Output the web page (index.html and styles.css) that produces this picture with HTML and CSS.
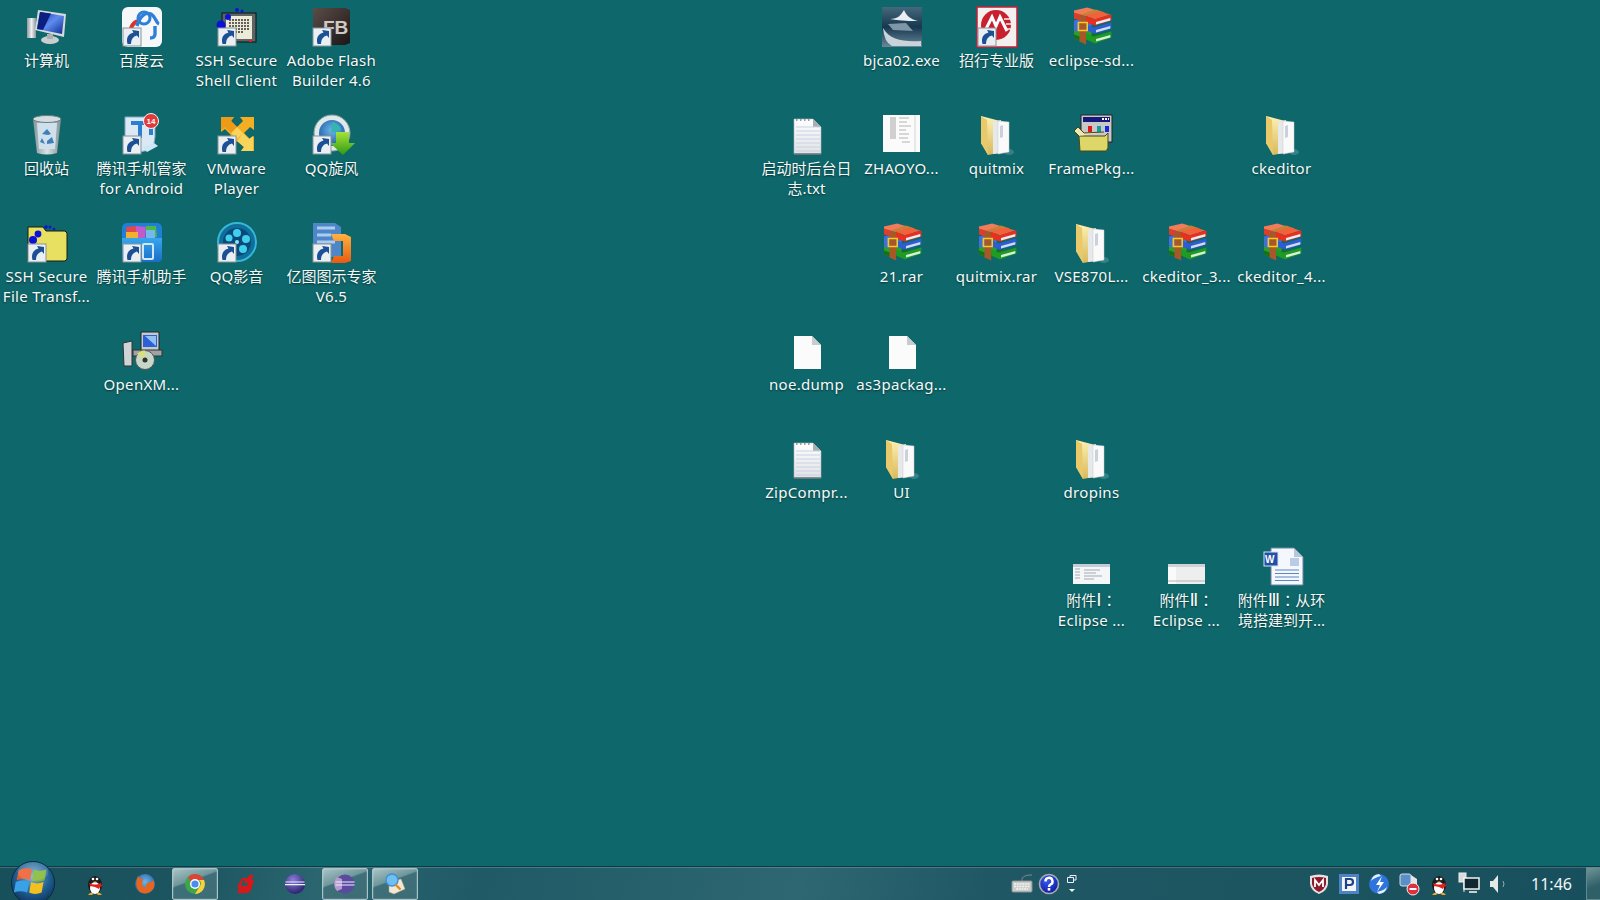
FILE: index.html
```html
<!DOCTYPE html>
<html lang="zh-CN">
<head>
    <meta charset="UTF-8">
    <title>桌面</title>
    <link rel="stylesheet" href="styles.css">
</head>
<body>
<svg class="defs" aria-hidden="true">
    <defs>
        <linearGradient id="gScreen" x1="0" y1="0" x2="1" y2="1"><stop offset="0" stop-color="#0a2ea8"/><stop offset=".5" stop-color="#5f8cf0"/><stop offset="1" stop-color="#0c2a90"/></linearGradient>
        <linearGradient id="gGrey" x1="0" y1="0" x2="1" y2="0"><stop offset="0" stop-color="#8f9a9c"/><stop offset=".5" stop-color="#eef1f1"/><stop offset="1" stop-color="#8d9698"/></linearGradient>
        <linearGradient id="gFolder" x1="0" y1="0" x2="0" y2="1"><stop offset="0" stop-color="#fdf0b4"/><stop offset="1" stop-color="#d9b95c"/></linearGradient>
        <linearGradient id="gPaper" x1="0" y1="0" x2="0" y2="1"><stop offset="0" stop-color="#ffffff"/><stop offset="1" stop-color="#dfe2e6"/></linearGradient>
        <linearGradient id="gDark" x1="0" y1="0" x2="1" y2="1"><stop offset="0" stop-color="#5b4d48"/><stop offset="1" stop-color="#1c1615"/></linearGradient>
        <linearGradient id="gBjca" x1="0" y1="0" x2="0" y2="1"><stop offset="0" stop-color="#45687c"/><stop offset=".5" stop-color="#16384f"/><stop offset="1" stop-color="#6a8798"/></linearGradient>
        <linearGradient id="gBlue" x1="0" y1="0" x2="0" y2="1"><stop offset="0" stop-color="#37a6ee"/><stop offset="1" stop-color="#1a6dc8"/></linearGradient>
        <linearGradient id="gGreen" x1="0" y1="0" x2="0" y2="1"><stop offset="0" stop-color="#a6e23a"/><stop offset="1" stop-color="#2f9a12"/></linearGradient>
        <linearGradient id="gOrange" x1="0" y1="0" x2="0" y2="1"><stop offset="0" stop-color="#ffb340"/><stop offset="1" stop-color="#e85a10"/></linearGradient>
        <radialGradient id="gOrb" cx=".5" cy=".35" r=".7"><stop offset="0" stop-color="#7fb4d8"/><stop offset=".55" stop-color="#1f5f92"/><stop offset="1" stop-color="#0b2c52"/></radialGradient>
        <radialGradient id="gEclipse" cx=".4" cy=".3" r=".8"><stop offset="0" stop-color="#8a80d8"/><stop offset="1" stop-color="#1d1560"/></radialGradient>
        <radialGradient id="gHelp" cx=".4" cy=".3" r=".8"><stop offset="0" stop-color="#3a5cf0"/><stop offset="1" stop-color="#08129a"/></radialGradient>
        <radialGradient id="gFox" cx=".5" cy=".4" r=".6"><stop offset="0" stop-color="#6fb6e8"/><stop offset="1" stop-color="#1e5fa8"/></radialGradient>

        <symbol id="sc" viewBox="0 0 48 48">
            <rect x="5" y="24" width="18" height="18" fill="#e9eff3" stroke="#8b9499"/>
            <path d="M9.500 40c-1.500-6 .5-10 6-11.500l-1.500-2.500 7 1v7l-2-2.500c-4 1-6 4-6 8.500z" fill="#1d4f95"/>
        </symbol>
        <symbol id="computer" viewBox="0 0 48 48">
            <ellipse cx="27" cy="36" rx="9" ry="4" fill="#c9cfd0"/>
            <rect x="4" y="14" width="9" height="20" fill="url(#gGrey)"/>
            <path d="M15 6 43 10 41 33 12 26z" fill="#d5dadb"/>
            <path d="M17 8 41 12 39 30 14 25z" fill="url(#gScreen)"/>
            <path d="M17 8 28 9.500 20 26 14 25z" fill="#0a1f80"/>
            <rect x="24" y="30" width="6" height="5" fill="#a9b0b2"/>
        </symbol>
        <symbol id="bin" viewBox="0 0 48 48">
            <path d="M10 7h28l-4 34q-10 3-20 0z" fill="url(#gGrey)" opacity=".9"/>
            <ellipse cx="24" cy="7" rx="14" ry="3.500" fill="#d4dde2" stroke="#6d7a80"/>
            <path d="M14 11h20l-2 26H16z" fill="#cfe0ec"/>
            <path d="M19 22l5-5 4 5-3 1zM29 25l2 6-7 1v-3zM19 26l3 6-5-2z" fill="#3d7fb8"/>
        </symbol>
        <symbol id="baidu" viewBox="0 0 48 48">
            <rect x="4" y="3" width="40" height="40" rx="6" fill="#f6f7f8"/>
            <path d="M13 26a9 9 0 0 1 9-9" stroke="#d8362c" stroke-width="4" fill="none"/>
            <path d="M19 22c3-11 9-14 14-12 5 3 5 9 8 10" stroke="#2f7fd8" stroke-width="3.400" fill="none"/>
            <circle cx="26" cy="14" r="6" fill="none" stroke="#2f7fd8" stroke-width="3"/>
            <path d="M37 22v8q0 4-5 4" stroke="#2f7fd8" stroke-width="3.400" fill="none"/>
        </symbol>
        <symbol id="ssh" viewBox="0 0 48 48">
            <rect x="9" y="9" width="34" height="29" fill="#5d6466" stroke="#111"/>
            <rect x="13" y="12" width="26" height="23" fill="#ecebd8"/>
            <path d="M16 16h20M16 19h20M16 22h20M16 25h20M16 28h14" stroke="#333" stroke-width="1.400" stroke-dasharray="2 1"/>
            <rect x="36" y="36" width="3" height="2" fill="#e02020"/>
            <circle cx="8" cy="21" r="4.500" fill="#0a12d8"/><circle cx="15" cy="13" r="3" fill="#0a12d8"/>
            <circle cx="24" cy="6" r="2" fill="#0a12d8"/><circle cx="29" cy="7" r="1.500" fill="#0a12d8"/>
        </symbol>
        <symbol id="flash" viewBox="0 0 48 48">
            <path d="M5 4h32l5 2v33l-5 2H5z" fill="url(#gDark)"/>
            <text x="15" y="30" class="fb">FB</text>
        </symbol>
        <symbol id="txgj" viewBox="0 0 48 48">
            <path d="M7 5h30v20q0 14-16 15H7z" fill="#dbe9f4" stroke="#7fa6c8"/>
            <path d="M13 11h20v12M22 12v14" stroke="#2a7fd0" stroke-width="4" fill="none"/>
            <path d="M24 35l12-4 4 3-11 6z" fill="#cfe7f5"/>
            <circle cx="33" cy="9" r="7.500" fill="#e23a3a" stroke="#f5f5f5"/>
            <text x="28.500" y="12" class="badge">14</text>
        </symbol>
        <symbol id="vmware" viewBox="0 0 48 48">
            <path d="M8 5h13l-3 4 6 6 6-6-3-4h14v13l-4-3-6 6 6 6 4-3v15H28l3-4-7-6-6 6 3 4H8V26l4 3 6-6-6-6-4 3z" fill="#f4ae22"/>
            <path d="M24 15l6 6-6 6-6-6zM30 21l6 6 4-3v15H28l3-4-7-6z" fill="#f8d45a"/>
            <path d="M8 5h13l-3 4 6 6-6 6-6-6-4 3z" fill="#ec9a18"/>
        </symbol>
        <symbol id="whirl" viewBox="0 0 48 48">
            <circle cx="24" cy="21" r="18" fill="#dfe9ea" stroke="#8a9ca0"/>
            <circle cx="24" cy="21" r="13" fill="url(#gFox)"/>
            <path d="M24 10a10 10 0 0 1 9 8l-10 3z" fill="#36b5b0"/>
            <path d="M28 20h13v11h6L35 43 22 31h6z" fill="url(#gGreen)"/>
        </symbol>
        <symbol id="sshfolder" viewBox="0 0 48 48">
            <path d="M5 7h15l3 4h19l2 2v26l-2 2H5z" fill="#e8e060" stroke="#1a1a08"/>
            <circle cx="15" cy="14" r="3.400" fill="#0a12d8"/><circle cx="10" cy="20" r="4" fill="#0a12d8"/>
            <circle cx="23" cy="7" r="1.800" fill="#0a12d8"/><circle cx="27" cy="7" r="1.500" fill="#0a12d8"/><circle cx="31" cy="9" r="1.300" fill="#0a12d8"/>
        </symbol>
        <symbol id="txzs" viewBox="0 0 48 48">
            <rect x="4" y="3" width="40" height="39" rx="5" fill="#1f7fd6"/>
            <path d="M8 7l10-1 2 11H9z" fill="#e24a4a"/>
            <path d="M18 6l10 1-1 11h-9z" fill="#c45ac8"/>
            <path d="M28 6h10l1 11H28z" fill="#4cb848"/>
            <path d="M8 12h12v6H8z" fill="#f2b030"/>
            <path d="M28 10h9v8h-9z" fill="#76b8ec"/>
            <path d="M4 18h40v20q0 4-5 4H9q-5 0-5-4z" fill="url(#gBlue)"/>
            <rect x="25" y="24" width="10" height="15" rx="1" fill="none" stroke="#cfe7f8" stroke-width="2"/>
        </symbol>
        <symbol id="qqplayer" viewBox="0 0 48 48">
            <circle cx="24" cy="22" r="19" fill="#0d6f9a" stroke="#35b7d8" stroke-width="2"/>
            <circle cx="24" cy="22" r="14" fill="#0b4a78"/>
            <circle cx="24" cy="13" r="4" fill="#3fd0ee"/><circle cx="33" cy="19" r="4" fill="#3fd0ee"/>
            <circle cx="30" cy="29" r="4" fill="#3fd0ee"/><circle cx="24" cy="22" r="2" fill="#8fe6f5"/>
            <circle cx="16" cy="18" r="3.500" fill="#3fd0ee"/>
        </symbol>
        <symbol id="edraw" viewBox="0 0 48 48">
            <path d="M5 3h22l6 4v30H5z" fill="#4e86c8"/>
            <path d="M9 8h18M9 15h14M9 22h18" stroke="#a9cdf0" stroke-width="3"/>
            <path d="M23 14h14l6 3v24l-6 2H23l3-7h9V21H26z" fill="url(#gOrange)"/>
        </symbol>
        <symbol id="setup" viewBox="0 0 48 48">
            <path d="M23 4h18v20H23z" fill="#c4c9ca" stroke="#222"/>
            <rect x="25" y="7" width="14" height="12" fill="#2c5fd8"/>
            <path d="M27 8h11v10z" fill="#8fc2f0"/>
            <path d="M5 15l9-2v25H6z" fill="#cfd4d4" stroke="#333"/>
            <rect x="15" y="22" width="29" height="6" fill="#9ea3a3" stroke="#333"/>
            <circle cx="27" cy="32" r="9.500" fill="#c8d8c8" stroke="#555"/>
            <path d="M27 32l-8-6a9.500 9.500 0 0 1 8-3.500z" fill="#d8e080"/>
            <circle cx="27" cy="32" r="2.500" fill="#333"/>
        </symbol>
        <symbol id="bjca" viewBox="0 0 48 48">
            <rect x="4" y="3" width="40" height="40" fill="url(#gBjca)"/>
            <path d="M12 15c8 0 11-4 14-9 2 5 6 9 14 11-9 0-14 0-28-2z" fill="#e8eef2"/>
            <path d="M5 24c7 12 20 14 38 13v5H14q-8-4-9-18z" fill="#c8d3da"/>
            <path d="M10 20l18-1 7 8-20-1z" fill="#7e96a6"/>
        </symbol>
        <symbol id="cmb" viewBox="0 0 48 48">
            <rect x="4" y="3" width="40" height="40" fill="#f4f0ee" stroke="#c41e3a" stroke-width="1.500"/>
            <circle cx="23" cy="21" r="15" fill="#c8202f"/>
            <path d="M12 27l7-14 4 9 4-9 7 14" stroke="#fff" stroke-width="3" fill="none"/>
            <path d="M31 15h10M33 20h8M33 25h8" stroke="#f4f0ee" stroke-width="1.600"/>
        </symbol>
        <symbol id="rar" viewBox="0 0 48 48">
            <g transform="translate(.5 2.500) scale(1.100 1)">
                <path d="M5 23l13-4 3 4v8l-8 4-8-3z" fill="#2aa02a"/>
                <path d="M5 32l8 3 14-4v-4l-14 4-8-3z" fill="#187018"/>
                <path d="M5 14l9-3 7 4v8l-8 4-8-3z" fill="#3f6fd8"/>
                <path d="M5 4l12-3 9 3-13 5-8-2z" fill="#f07c5c"/>
                <path d="M5 6l9 3v6L5 12z" fill="#e03c2c"/>
                <path d="M11 8l14-5 8 3-14 5z" fill="#c88038"/>
                <path d="M10 8l6 2v28l-6-3z" fill="#a85828"/>
                <path d="M16 9l13-4 9 3-14 5z" fill="#f2603c"/>
                <path d="M16 9l7 4 16-5v6l-15 5-8-3z" fill="#e8301c"/>
                <path d="M25 15.500l13-4v2.500l-13 4z" fill="#e8eef8"/>
                <path d="M16 18l7 3 16-5v6l-15 5-8-3z" fill="#2f5cd0"/>
                <path d="M25 23.500l13-4v2.500l-13 4z" fill="#cfdcf5"/>
                <path d="M16 27l7 3 16-5v6l-15 6-8-4z" fill="#1f9a22"/>
                <path d="M25 32.500l13-4v2.500l-13 4z" fill="#d8efd8"/>
                <rect x="9" y="16" width="8" height="8" fill="none" stroke="#f8c820" stroke-width="1.500"/>
            </g>
        </symbol>
        <symbol id="folder" viewBox="0 0 48 48">
            <ellipse cx="36" cy="40" rx="5" ry="3" fill="#4f9598" opacity=".6"/>
            <path d="M8 4l23 6v30L15 43 8 31z" fill="url(#gFolder)"/>
            <path d="M20 10l8-2 1 33-9 1z" fill="#e6e8ea"/>
            <path d="M25 9l11 1v30l-11 2z" fill="#fafafa" stroke="#c8c8c8" stroke-width=".5"/>
            <path d="M27 14l3-1v12l-3 1z" fill="#c9d2da"/>
            <path d="M8 4l6 4 1 35-7-12z" fill="#e9c96a"/>
        </symbol>
        <symbol id="note" viewBox="0 0 48 48">
            <path d="M11 7h19l8 8v27H11z" fill="url(#gPaper)" stroke="#aeb4b8" stroke-width=".6"/>
            <path d="M30 7v8h8z" fill="#a9aeb2"/>
            <path d="M13 15h24M13 19h24M13 23h24M13 27h24M13 31h24M13 35h24M13 39h24" stroke="#c9d2e4"/>
            <path d="M13 8h16" stroke="#9aa0a4" stroke-dasharray="1.500 2.500" stroke-width="2"/>
            <path d="M11 42h27" stroke="#6d7478" stroke-width="1.500"/>
        </symbol>
        <symbol id="blank" viewBox="0 0 48 48">
            <path d="M11 8h18l9 9v24H11z" fill="#fbfbfb"/>
            <path d="M29 8v9h9z" fill="#c9cccf"/>
        </symbol>
        <symbol id="zhaoyo" viewBox="0 0 48 48">
            <rect x="5" y="3" width="37" height="37" fill="#fbfbfb"/>
            <path d="M12 6h6M12 8h6M12 10h6M12 12h6M12 14h6M12 16h6M12 18h6M12 20h6M12 22h6M12 24h6M12 26h6" stroke="#9a9a9a" stroke-width=".9"/>
            <path d="M21 6h10M21 10h8M21 14h12M21 18h7M21 22h10M21 26h9M24 30h8" stroke="#aaa" stroke-width=".9"/>
            <path d="M37 3v37" stroke="#d6d6d6"/>
        </symbol>
        <symbol id="framepkg" viewBox="0 0 48 48">
            <rect x="13" y="3" width="31" height="27" fill="#c8c8c8" stroke="#222"/>
            <rect x="15" y="5" width="27" height="5" fill="#16187a"/>
            <path d="M34 6h2v2h-2zM37 6h2v2h-2zM40 6h1v2h-1z" fill="#fff"/>
            <rect x="20" y="14" width="4" height="6" fill="#e01818"/><rect x="29" y="14" width="4" height="6" fill="#10a0a0"/><rect x="37" y="14" width="4" height="6" fill="#1828d8"/>
            <path d="M11 24h28v15H13z" fill="#e6e070"/>
            <path d="M11 24h26l3-3v15l-2 3H12z" fill="#ddd76a" stroke="#4a4614"/>
            <path d="M11 24l-5-5 4-4 6 6 20-1" fill="#efe9b0" stroke="#4a4614"/>
        </symbol>
        <symbol id="shot1" viewBox="0 0 48 48">
            <rect x="5" y="20" width="37" height="20" fill="#f4f6f8"/>
            <rect x="5" y="20" width="37" height="3" fill="#c4ccd8"/>
            <path d="M7 25h5M7 28h5M7 31h5M7 34h5M16 26h16M16 29h12M16 32h18M16 35h10" stroke="#a2a8b4"/>
        </symbol>
        <symbol id="shot2" viewBox="0 0 48 48">
            <rect x="5" y="20" width="37" height="20" fill="#eeeeee"/>
            <rect x="5" y="20" width="37" height="3" fill="#cfd3d8"/>
            <rect x="5" y="23" width="8" height="17" fill="#fafafa"/>
            <path d="M5 37h37" stroke="#b0b4b8"/>
        </symbol>
        <symbol id="word" viewBox="0 0 48 48">
            <path d="M13 4h23l9 9v28H13z" fill="#f4f7fb" stroke="#6c82a4"/>
            <path d="M36 4v9h9z" fill="#b8c6da"/>
            <path d="M17 26h24M17 29.500h24M17 33h24M17 36.500h24" stroke="#5a86c8"/>
            <rect x="32" y="14" width="9" height="8" fill="#b8cce6"/>
            <rect x="6" y="8" width="14" height="14" fill="#2050a8" stroke="#d8e0ee"/>
            <text x="7" y="18.500" class="w">W</text>
        </symbol>

        <symbol id="qq" viewBox="0 0 24 24">
            <ellipse cx="12" cy="13" rx="7" ry="9" fill="#1c1c1c"/>
            <ellipse cx="12" cy="16" rx="5" ry="6" fill="#fff"/>
            <path d="M6 11q6 3 12 0l1 3q-3 1-3 3l-4-2-5-1z" fill="#e02020"/>
            <path d="M7 21h4l-2 2H5zM13 21h4l2 2h-4z" fill="#f4a81c"/>
            <circle cx="10" cy="7" r="1.300" fill="#fff"/><circle cx="14" cy="7" r="1.300" fill="#fff"/>
            <path d="M10.500 9.500h3l-1.500 1.500z" fill="#f4a81c"/>
        </symbol>
        <symbol id="firefox" viewBox="0 0 24 24">
            <circle cx="12" cy="12" r="10" fill="url(#gFox)"/>
            <path d="M5 4c-2 5-3 12 2 16 5 3 12 1 14-5 1-3 0-6-1-7-1 3-3 3-4 2-2 1-4 3-2 5-3 1-5-1-5-4 0-2 1-3 2-4-3 0-4 0-6-3z" fill="#e8651c"/>
        </symbol>
        <symbol id="chrome" viewBox="0 0 24 24">
            <circle cx="12" cy="12" r="10" fill="#3ea648"/>
            <path d="M12 2a10 10 0 0 1 9 6H12a4 4 0 0 0-4 2L5 5a10 10 0 0 1 7-3z" fill="#dd4235"/>
            <path d="M21 8a10 10 0 0 1-9 14l5-8a4 4 0 0 0-1-6z" fill="#fbcf3e"/>
            <circle cx="12" cy="12" r="5" fill="#fff"/><circle cx="12" cy="12" r="3.600" fill="#4a8cf0"/>
        </symbol>
        <symbol id="flashget" viewBox="0 0 24 24">
            <path d="M17 2l4 2-3 4H10l-2 6h6l1-3H11l1-3h9l-3 10-3 3H4l2-5-2-1 5-9h6z" fill="#d81818"/>
        </symbol>
        <symbol id="eclipse" viewBox="0 0 24 24">
            <circle cx="12" cy="12" r="10" fill="url(#gEclipse)"/>
            <path d="M2.500 10h19M2 12.600h20" stroke="#f0f0ff" stroke-width="1.100"/>
        </symbol>
        <symbol id="eclipse2" viewBox="0 0 24 24">
            <circle cx="12" cy="12" r="9.500" fill="#5a4aa0"/>
            <path d="M4 5a10 10 0 0 0 0 14l5-2V7z" fill="#b89ad0"/>
            <path d="M2.500 10h19M2.500 13h19" stroke="#f0f0ff" stroke-width="1.200"/>
        </symbol>
        <symbol id="search" viewBox="0 0 24 24">
            <path d="M6 10l12-3 4 10-11 5-5-2z" fill="#f2e8d4" stroke="#b0a58c" stroke-width=".5"/>
            <circle cx="9" cy="8" r="6" fill="#6fc0f0" stroke="#3f8fd8" stroke-width="1.400"/>
            <path d="M12.500 12.500l5 5" stroke="#e08a20" stroke-width="2.400"/>
        </symbol>
        <symbol id="keyboard" viewBox="0 0 24 24">
            <path d="M12 9c-1-5 5-6 10-6" stroke="#888" fill="none"/>
            <rect x="2" y="9" width="20" height="11" rx="1" fill="#c8ccca" stroke="#8b8f8d"/>
            <path d="M4 12h16M4 14.500h16M6 17h12" stroke="#f2f4f2" stroke-width="1.400" stroke-dasharray="2 .7"/>
        </symbol>
        <symbol id="help" viewBox="0 0 24 24">
            <circle cx="12" cy="12" r="9.500" fill="url(#gHelp)" stroke="#a8acb0" stroke-width="1.600"/>
            <path d="M8.500 9.500a3.500 3.500 0 1 1 5 3c-1 .6-1.500 1-1.500 2.500" fill="none" stroke="#fff" stroke-width="2.400"/>
            <rect x="10.700" y="16" width="2.600" height="2.600" fill="#fff"/>
        </symbol>
        <symbol id="mcafee" viewBox="0 0 24 24">
            <path d="M3 4q9-3 18 0v8q-1 7-9 10-8-3-9-10z" fill="#e8e2e0"/>
            <path d="M5 6q7-2 14 0v6q-1 5-7 8-6-3-7-8z" fill="#8c1c2c"/>
            <path d="M8 15V8l4 5 4-5v7" stroke="#fff" stroke-width="1.800" fill="none"/>
        </symbol>
        <symbol id="parking" viewBox="0 0 24 24">
            <rect x="2" y="2" width="20" height="20" fill="#4d84c8"/>
            <rect x="5" y="5" width="14" height="14" fill="#f2f5f8"/>
            <path d="M9 17V7h4a3 3 0 0 1 0 6H9" stroke="#20408c" stroke-width="2.200" fill="none"/>
        </symbol>
        <symbol id="thunder" viewBox="0 0 24 24">
            <circle cx="12" cy="12" r="10" fill="#2d74dc"/>
            <path d="M4 9a9 9 0 0 1 8-7l2 2c-5 1-8 3-10 5z" fill="#e8f0fa"/>
            <path d="M20 15a9 9 0 0 1-8 7l-2-2c5-1 8-3 10-5z" fill="#e8f0fa"/>
            <path d="M15 4l-6 9h4l-3 7 7-10h-4z" fill="#fff"/>
        </symbol>
        <symbol id="netblock" viewBox="0 0 24 24">
            <rect x="3" y="2" width="11" height="12" rx="2" fill="#5a90c8" stroke="#d8dde0"/>
            <path d="M14 3l6 4v6h-6z" fill="#e4e4e4"/>
            <circle cx="16" cy="17" r="6" fill="#e03040" stroke="#f0f0f0"/>
            <rect x="12.500" y="16" width="7" height="2" fill="#fff"/>
        </symbol>
        <symbol id="network" viewBox="0 0 24 24">
            <rect x="2" y="1" width="7" height="9" fill="#d8dcdc" stroke="#eee"/>
            <path d="M7 5v15" stroke="#eee"/>
            <rect x="7" y="6" width="15" height="11" fill="#102830" stroke="#f2f2f2" stroke-width="1.500"/>
            <path d="M12 20h8" stroke="#f2f2f2" stroke-width="1.600"/>
        </symbol>
        <symbol id="volume" viewBox="0 0 24 24">
            <path d="M3 9h3l5-6v18l-5-6H3z" fill="#e6e8e8"/>
            <path d="M16 9q2 3 0 6" stroke="#9aa" fill="none"/>
        </symbol>
    </defs>
</svg>

<div class="desktop">
    <div class="item c0 r0"><svg class="ico"><use href="#computer"/></svg><span class="label">计算机</span></div>
    <div class="item c1 r0"><svg class="ico"><use href="#baidu"/><use href="#sc"/></svg><span class="label">百度云</span></div>
    <div class="item c2 r0"><svg class="ico"><use href="#ssh"/><use href="#sc"/></svg><span class="label en">SSH Secure<br>Shell Client</span></div>
    <div class="item c3 r0"><svg class="ico"><use href="#flash"/><use href="#sc"/></svg><span class="label en">Adobe Flash<br>Builder 4.6</span></div>
    <div class="item c9 r0"><svg class="ico"><use href="#bjca"/></svg><span class="label en">bjca02.exe</span></div>
    <div class="item c10 r0"><svg class="ico"><use href="#cmb"/><use href="#sc"/></svg><span class="label">招行专业版</span></div>
    <div class="item c11 r0"><svg class="ico"><use href="#rar"/></svg><span class="label en">eclipse-sd...</span></div>

    <div class="item c0 r1"><svg class="ico"><use href="#bin"/></svg><span class="label">回收站</span></div>
    <div class="item c1 r1"><svg class="ico"><use href="#txgj"/><use href="#sc"/></svg><span class="label">腾讯手机管家<br><span class="en">for Android</span></span></div>
    <div class="item c2 r1"><svg class="ico"><use href="#vmware"/><use href="#sc"/></svg><span class="label en">VMware<br>Player</span></div>
    <div class="item c3 r1"><svg class="ico"><use href="#whirl"/><use href="#sc"/></svg><span class="label">QQ旋风</span></div>
    <div class="item c8 r1"><svg class="ico"><use href="#note"/></svg><span class="label">启动时后台日<br>志.txt</span></div>
    <div class="item c9 r1"><svg class="ico"><use href="#zhaoyo"/></svg><span class="label en">ZHAOYO...</span></div>
    <div class="item c10 r1"><svg class="ico"><use href="#folder"/></svg><span class="label en">quitmix</span></div>
    <div class="item c11 r1"><svg class="ico"><use href="#framepkg"/></svg><span class="label en">FramePkg...</span></div>
    <div class="item c13 r1"><svg class="ico"><use href="#folder"/></svg><span class="label en">ckeditor</span></div>

    <div class="item c0 r2"><svg class="ico"><use href="#sshfolder"/><use href="#sc"/></svg><span class="label en">SSH Secure<br>File Transf...</span></div>
    <div class="item c1 r2"><svg class="ico"><use href="#txzs"/><use href="#sc"/></svg><span class="label">腾讯手机助手</span></div>
    <div class="item c2 r2"><svg class="ico"><use href="#qqplayer"/><use href="#sc"/></svg><span class="label">QQ影音</span></div>
    <div class="item c3 r2"><svg class="ico"><use href="#edraw"/><use href="#sc"/></svg><span class="label">亿图图示专家<br><span class="en">V6.5</span></span></div>
    <div class="item c9 r2"><svg class="ico"><use href="#rar"/></svg><span class="label en">21.rar</span></div>
    <div class="item c10 r2"><svg class="ico"><use href="#rar"/></svg><span class="label en">quitmix.rar</span></div>
    <div class="item c11 r2"><svg class="ico"><use href="#folder"/></svg><span class="label en">VSE870L...</span></div>
    <div class="item c12 r2"><svg class="ico"><use href="#rar"/></svg><span class="label en">ckeditor_3...</span></div>
    <div class="item c13 r2"><svg class="ico"><use href="#rar"/></svg><span class="label en">ckeditor_4...</span></div>

    <div class="item c1 r3"><svg class="ico"><use href="#setup"/></svg><span class="label en">OpenXM...</span></div>
    <div class="item c8 r3"><svg class="ico"><use href="#blank"/></svg><span class="label en">noe.dump</span></div>
    <div class="item c9 r3"><svg class="ico"><use href="#blank"/></svg><span class="label en">as3packag...</span></div>

    <div class="item c8 r4"><svg class="ico"><use href="#note"/></svg><span class="label en">ZipCompr...</span></div>
    <div class="item c9 r4"><svg class="ico"><use href="#folder"/></svg><span class="label en">UI</span></div>
    <div class="item c11 r4"><svg class="ico"><use href="#folder"/></svg><span class="label en">dropins</span></div>

    <div class="item c11 r5"><svg class="ico"><use href="#shot1"/></svg><span class="label cn-tc" lang="zh-TW">附件<span class="roman">Ⅰ</span>：<br><span class="en">Eclipse ...</span></span></div>
    <div class="item c12 r5"><svg class="ico"><use href="#shot2"/></svg><span class="label cn-tc" lang="zh-TW">附件<span class="roman">Ⅱ</span>：<br><span class="en">Eclipse ...</span></span></div>
    <div class="item c13 r5"><svg class="ico"><use href="#word"/></svg><span class="label cn-tc" lang="zh-TW">附件<span class="roman">Ⅲ</span>：从环<br>境搭建到开...</span></div>
</div>

<div class="taskbar">
    <svg class="orb" viewBox="0 0 48 48">
        <circle cx="24" cy="24" r="22.500" fill="url(#gOrb)" stroke="#0c2a3c"/>
        <path d="M9 11q6-4 14-1l-2 11q-7-3-14 0z" fill="#ee5a2a"/>
        <path d="M25 10q6 3 13 0l-2 11q-7 3-13 0z" fill="#80b830"/>
        <path d="M6 23q7-3 14 0l-2 11q-7-3-14 0z" fill="#3aa0e8"/>
        <path d="M22 23q6 3 13 0l-2 11q-7 3-13 0z" fill="#f4c020"/>
        <ellipse cx="24" cy="12" rx="16" ry="10" fill="#fff" opacity=".14"/>
    </svg>
    <div class="tasks">
        <div class="task"><svg class="tk"><use href="#qq"/></svg></div>
        <div class="task"><svg class="tk"><use href="#firefox"/></svg></div>
        <div class="task on"><svg class="tk"><use href="#chrome"/></svg></div>
        <div class="task"><svg class="tk"><use href="#flashget"/></svg></div>
        <div class="task"><svg class="tk"><use href="#eclipse"/></svg></div>
        <div class="task on"><svg class="tk"><use href="#eclipse2"/></svg></div>
        <div class="task on"><svg class="tk"><use href="#search"/></svg></div>
    </div>
    <div class="langbar">
        <svg class="tk"><use href="#keyboard"/></svg>
        <svg class="tk"><use href="#help"/></svg>
        <div class="lang-ctl">
            <svg class="restore" viewBox="0 0 10 8"><path d="M.5 2.500h6v5h-6zM3 2.500v-2h6v4.500H6.500" fill="none" stroke="#eef"/></svg>
            <span class="caret"></span>
        </div>
    </div>
    <div class="tray">
        <svg class="tk"><use href="#mcafee"/></svg>
        <svg class="tk"><use href="#parking"/></svg>
        <svg class="tk"><use href="#thunder"/></svg>
        <svg class="tk"><use href="#netblock"/></svg>
        <svg class="tk"><use href="#qq"/></svg>
        <svg class="tk"><use href="#network"/></svg>
        <svg class="tk"><use href="#volume"/></svg>
    </div>
    <div class="clock">11:46</div>
    <div class="show-desktop"></div>
</div>
</body>
</html>
```

FILE: styles.css
```css
html, body {
    margin: 0;
    padding: 0;
    height: 100%;
    overflow: hidden;
}
body {
    width: 1600px;
    height: 900px;
    background-color: #0e686b;
    font-family: "Noto Sans", "Noto Sans CJK SC", sans-serif;
    display: flex;
    flex-direction: column;
}
.defs {
    position: absolute;
    width: 0;
    height: 0;
}
.desktop {
    flex: 1;
    display: grid;
    grid-template-columns: repeat(14, 95px);
    grid-template-rows: repeat(6, 108px);
    padding-top: 4px;
    margin-left: -1px;
}
.item {
    display: flex;
    flex-direction: column;
    align-items: center;
}
.ico {
    width: 48px;
    height: 48px;
    flex: none;
}
.label {
    margin-top: -2px;
    color: #f4fafa;
    font-size: 15px;
    line-height: 20px;
    text-align: center;
    white-space: nowrap;
    text-shadow: 0 1px 2px rgba(0,0,0,0.55);
}
.en {
    letter-spacing: 0.3px;
}
.cn-tc {
    font-family: "Noto Sans", "Noto Sans CJK TC", sans-serif;
}
.roman {
    font-family: "DejaVu Sans", sans-serif;
    font-size: 18px;
    line-height: 0;
}
.c0 { grid-column: 1; }
.c1 { grid-column: 2; }
.c2 { grid-column: 3; }
.c3 { grid-column: 4; }
.c8 { grid-column: 9; }
.c9 { grid-column: 10; }
.c10 { grid-column: 11; }
.c11 { grid-column: 12; }
.c12 { grid-column: 13; }
.c13 { grid-column: 14; }
.r0 { grid-row: 1; }
.r1 { grid-row: 2; }
.r2 { grid-row: 3; }
.r3 { grid-row: 4; }
.r4 { grid-row: 5; }
.r5 { grid-row: 6; }
.fb {
    font: bold 19px "Liberation Sans", sans-serif;
    fill: #cfc8c4;
}
.badge {
    font: bold 8px "Liberation Sans", sans-serif;
    fill: #fff;
}
.w {
    font: bold 10px "Liberation Sans", sans-serif;
    fill: #fff;
}

.taskbar {
    height: 33px;
    flex: none;
    display: flex;
    align-items: center;
    position: relative;
    border-top: 1px solid #0d3a44;
    box-shadow: inset 0 1px 0 rgba(255,255,255,0.18);
    background: linear-gradient(105deg, #17505a 0%, #1c5560 12%, #2a6570 20%, #205a66 30%, #26606b 40%, #2e6772 50%, #1f5864 62%, #1c5460 80%, #17505c 100%);
}
.orb {
    position: absolute;
    left: 10px;
    top: -7px;
    width: 46px;
    height: 46px;
}
.tasks {
    display: flex;
    gap: 4px;
    margin-left: 72px;
    align-self: stretch;
    padding-top: 1px;
}
.task {
    width: 46px;
    display: flex;
    align-items: center;
    justify-content: center;
    box-sizing: border-box;
    border: 1px solid transparent;
    border-radius: 2px;
}
.task.on {
    border-color: #a8c4c8;
    background: linear-gradient(160deg, #a9c4c6 0%, #6f979c 38%, #3f6f78 42%, #3c6c76 100%);
    box-shadow: inset 0 0 0 1px rgba(255,255,255,0.12);
}
.tk {
    width: 24px;
    height: 24px;
}
.langbar {
    display: flex;
    align-items: center;
    gap: 3px;
    margin-left: 592px;
}
.lang-ctl {
    display: flex;
    flex-direction: column;
    align-items: center;
    gap: 6px;
    margin-left: 3px;
}
.restore {
    width: 10px;
    height: 8px;
}
.caret {
    width: 0;
    height: 0;
    border-left: 3px solid transparent;
    border-right: 3px solid transparent;
    border-top: 3px solid #f0f4f4;
}
.tray {
    display: flex;
    align-items: center;
    gap: 6px;
    margin-left: auto;
}
.clock {
    width: 75px;
    text-align: center;
    color: #f2f6f6;
    font-size: 16px;
    padding-left: 6px;
    box-sizing: border-box;
}
.show-desktop {
    width: 14px;
    align-self: stretch;
    border: 1px solid #5f8a90;
    border-right: none;
    box-sizing: border-box;
    background: linear-gradient(160deg, #6f9498 0%, #2f6068 60%);
}
```
